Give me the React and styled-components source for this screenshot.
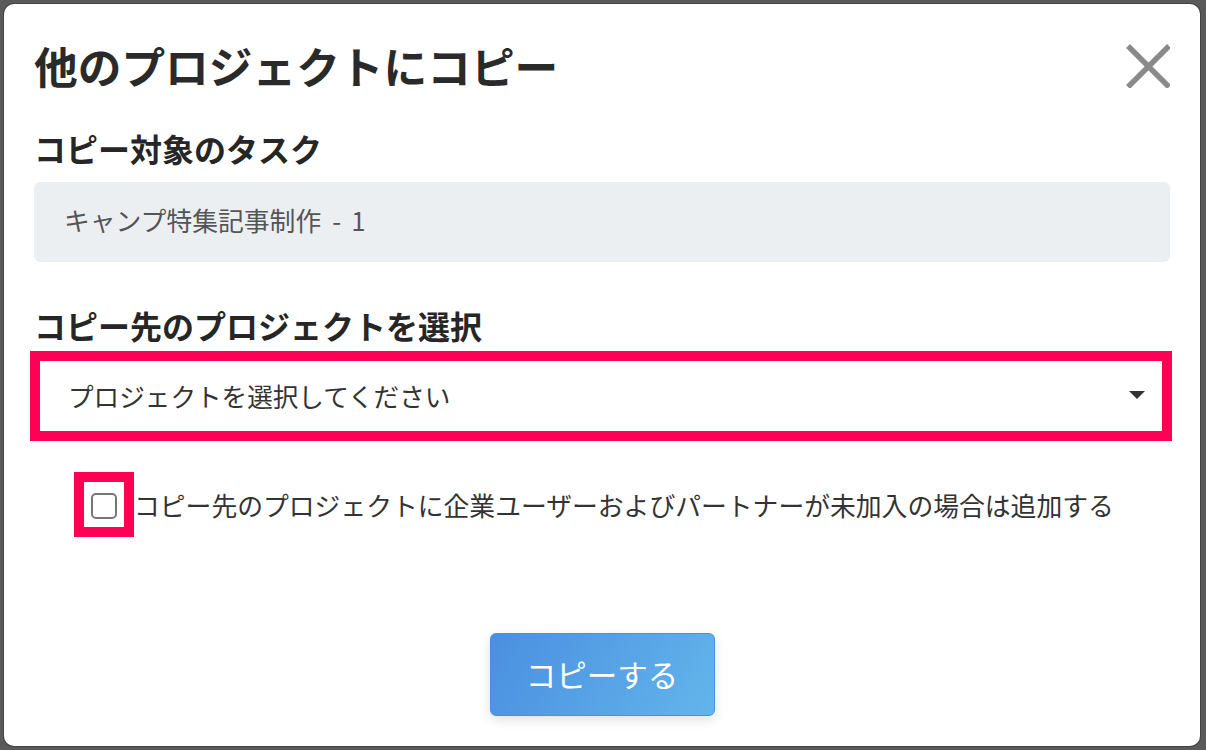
import React, { useState } from "react";
import styled, { createGlobalStyle } from "styled-components";

const GlobalStyle = createGlobalStyle`
  html, body {
    margin: 0;
    padding: 0;
  }
  body {
    font-family: "Noto Sans CJK JP", "Noto Sans", sans-serif;
    background: #5a5a5a;
  }
  * {
    box-sizing: border-box;
  }
`;

const Backdrop = styled.div`
  width: 1206px;
  height: 750px;
  padding: 4px 6px 4px 4px;
  background: #5a5a5a;
`;

const Modal = styled.div`
  height: 100%;
  display: flex;
  flex-direction: column;
  padding: 40px 30px 30px 30px;
  background: #ffffff;
  border-radius: 10px;
  box-shadow: 0 0 0 1px rgba(0, 0, 0, 0.25);
`;

const Header = styled.div`
  display: flex;
  align-items: center;
  justify-content: space-between;
  height: 44px;
`;

const Title = styled.h1`
  margin: 0 0 3px 0;
  font-size: 43.7px;
  line-height: 40px;
  font-weight: 700;
  color: #2a2a2a;
`;

const CloseButton = styled.button`
  display: flex;
  align-items: center;
  justify-content: center;
  width: 44px;
  height: 44px;
  padding: 0;
  border: none;
  background: none;
  cursor: pointer;
`;

const Label = styled.div`
  margin-top: ${(p) => p.$gap}px;
  height: 32px;
  font-size: 32px;
  line-height: 28px;
  font-weight: 700;
  color: #262626;
`;

const ReadOnly = styled.div`
  margin-top: 16px;
  height: 80px;
  display: flex;
  align-items: center;
  padding: 0 0 6px 30px;
  background: #eceff1;
  border-radius: 6px;
  font-size: 25.8px;
  color: #555;
`;

const Dash = styled.span`
  margin: 0 10px 0 11px;
`;

const Select = styled.div`
  margin: 8px -2px 0 -4px;
  height: 90px;
  display: flex;
  align-items: center;
  justify-content: space-between;
  padding: 0 17px 2px 28px;
  border: 10px solid #ff0055;
  background: #fff;
  font-size: 25.6px;
  color: #333;
  cursor: pointer;
`;

const CheckRow = styled.label`
  margin-top: 31px;
  margin-left: 40px;
  display: flex;
  align-items: center;
  font-size: 25.8px;
  line-height: 1;
  color: #333;
  cursor: pointer;
`;

const CheckFrame = styled.span`
  width: 60px;
  height: 65px;
  display: flex;
  align-items: center;
  justify-content: center;
  border: 10px solid #ff0055;
  background: #fff;
`;

const CheckBox = styled.input`
  appearance: none;
  margin: 2px 0 0 0;
  width: 26px;
  height: 26px;
  border: 2px solid #767676;
  border-radius: 5px;
  background: #fff;
  cursor: pointer;

  &:checked {
    background: #4a90e2;
    border-color: #4a90e2;
  }
`;

const Footer = styled.div`
  margin-top: 96px;
  display: flex;
  justify-content: center;
`;

const CopyButton = styled.button`
  width: 225px;
  height: 83px;
  padding-bottom: 2px;
  border: 1px solid #4b8fe0;
  border-radius: 6px;
  background: linear-gradient(120deg, #4a8fe0 0%, #63b5eb 100%);
  box-shadow: 0 4px 12px rgba(0, 0, 0, 0.12);
  color: #fff;
  font-family: inherit;
  font-size: 30.5px;
  cursor: pointer;
`;

const Caret = () => (
  <svg width="16" height="8" viewBox="0 0 16 8">
    <path d="M0 0h16L8 8z" fill="#333" />
  </svg>
);

const CloseIcon = () => (
  <svg width="44" height="44" viewBox="0 0 44 44">
    <path d="M2 2L43 43M43 2L2 43" stroke="#8a8a8a" strokeWidth="5.5" />
  </svg>
);

export default function App() {
  const [addMembers, setAddMembers] = useState(false);

  return (
    <>
      <GlobalStyle />
      <Backdrop>
        <Modal>
          <Header>
            <Title>他のプロジェクトにコピー</Title>
            <CloseButton aria-label="閉じる">
              <CloseIcon />
            </CloseButton>
          </Header>

          <Label $gap={46}>コピー対象のタスク</Label>
          <ReadOnly>
            キャンプ特集記事制作<Dash>-</Dash>1
          </ReadOnly>

          <Label $gap={49}>コピー先のプロジェクトを選択</Label>
          <Select>
            <span>プロジェクトを選択してください</span>
            <Caret />
          </Select>

          <CheckRow>
            <CheckFrame>
              <CheckBox
                type="checkbox"
                checked={addMembers}
                onChange={(e) => setAddMembers(e.target.checked)}
              />
            </CheckFrame>
            コピー先のプロジェクトに企業ユーザーおよびパートナーが未加入の場合は追加する
          </CheckRow>

          <Footer>
            <CopyButton>コピーする</CopyButton>
          </Footer>
        </Modal>
      </Backdrop>
    </>
  );
}
